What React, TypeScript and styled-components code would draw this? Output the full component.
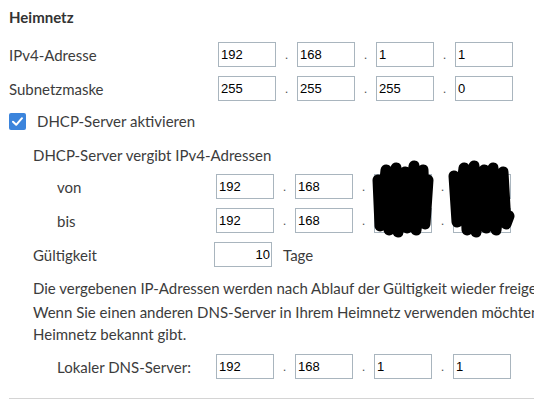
import React from "react";
import styled, { createGlobalStyle } from "styled-components";

const Global = createGlobalStyle`
  html, body { margin: 0; padding: 0; overflow: hidden; background: #ffffff; }
  body { font-family: Lato, "Open Sans", sans-serif; color: #3c3c3c; }
`;

const Page = styled.div`
  width: 900px;
  padding: 7px 0 0 9px;
  display: flex;
  flex-direction: column;
`;

const Heading = styled.h2`
  margin: 0 0 15px 0;
  font-size: 15px;
  line-height: 20px;
  font-weight: 700;
  color: #333;
`;

const Row = styled.div<{ $mt?: number; $indent?: number }>`
  display: flex;
  align-items: center;
  height: 25px;
  margin-top: ${(p) => p.$mt ?? 0}px;
  padding-left: ${(p) => p.$indent ?? 0}px;
`;

const Label = styled.span<{ $w: number }>`
  width: ${(p) => p.$w}px;
  flex: none;
  font-size: 15px;
  line-height: 20px;
  white-space: nowrap;
`;

const Field = styled.input<{ $right?: boolean }>`
  box-sizing: border-box;
  width: 58px;
  height: 25px;
  margin: 0;
  padding: 0 1px 0 2px;
  border: 1px solid #a9b5be;
  border-radius: 0;
  background: #fff;
  color: #000;
  font-family: "Liberation Sans", Arial, sans-serif;
  font-size: 13px;
  text-align: ${(p) => (p.$right ? "right" : "left")};
  outline: none;
`;

const Dot = styled.span`
  width: 21px;
  flex: none;
  text-align: center;
  font-family: "Liberation Sans", Arial, sans-serif;
  font-size: 13px;
  color: #555;
`;

const CheckRow = styled.label`
  display: flex;
  align-items: center;
  height: 22px;
  margin-top: 9px;
  font-size: 15px;
  line-height: 20px;
  gap: 11px;
`;

const CheckBox = styled.span`
  width: 17px;
  height: 17px;
  border-radius: 2px;
  background: #3b84dc;
  display: flex;
  align-items: center;
  justify-content: center;
  flex: none;
`;

const Section = styled.div`
  padding-left: 24px;
  display: flex;
  flex-direction: column;
`;

const TextLine = styled.div<{ $mt?: number }>`
  margin-top: ${(p) => p.$mt ?? 0}px;
  font-size: 15px;
  line-height: 22px;
  white-space: nowrap;
`;

const RangeBlock = styled.div`
  position: relative;
  display: flex;
  flex-direction: column;
`;

const Scribble = styled.svg`
  position: absolute;
  left: 339px;
  top: -6px;
  width: 145px;
  height: 80px;
  pointer-events: none;
`;

const Unit = styled.span`
  margin-left: 11px;
  font-size: 15px;
`;

const Divider = styled.hr`
  margin: 19px 0 0 0;
  border: none;
  border-top: 1px solid #d4d4d4;
  height: 0;
`;

type IpProps = { values: string[] };
const IpInput = ({ values }: IpProps) => (
  <>
    {values.map((v, i) => (
      <React.Fragment key={i}>
        {i > 0 && <Dot>.</Dot>}
        <Field readOnly value={v} />
      </React.Fragment>
    ))}
  </>
);

export default function App() {
  return (
    <>
      <Global />
      <Page>
        <Heading>Heimnetz</Heading>
        <Row>
          <Label $w={209}>IPv4-Adresse</Label>
          <IpInput values={["192", "168", "1", "1"]} />
        </Row>
        <Row $mt={9}>
          <Label $w={209}>Subnetzmaske</Label>
          <IpInput values={["255", "255", "255", "0"]} />
        </Row>
        <CheckRow>
          <CheckBox>
            <svg width="13" height="13" viewBox="0 0 13 13">
              <path d="M2 6.8 L5.2 9.8 L11 3.2" stroke="#fff" strokeWidth="2" fill="none" strokeLinecap="round" strokeLinejoin="round" />
            </svg>
          </CheckBox>
          DHCP-Server aktivieren
        </CheckRow>
        <Section>
          <TextLine $mt={12}>DHCP-Server vergibt IPv4-Adressen</TextLine>
          <RangeBlock>
            <Row $mt={8} $indent={24}>
              <Label $w={159}>von</Label>
              <IpInput values={["192", "168", "", ""]} />
            </Row>
            <Row $mt={9} $indent={24}>
              <Label $w={159}>bis</Label>
              <IpInput values={["192", "168", "", ""]} />
            </Row>
            <Scribble viewBox="0 0 145 80">
              <path
                d="M6,20 L8,66 L14,10 L17,70 L24,8 L26,72 L33,12 L35,68 L42,6 L44,70 L51,10 L53,64 L56,20"
                stroke="#000" strokeWidth="11" fill="none" strokeLinecap="round" strokeLinejoin="round"
              />
              <path
                d="M82,16 L85,62 L92,8 L95,70 L102,6 L104,72 L112,10 L114,68 L121,8 L124,70 L131,12 L134,64 L137,56"
                stroke="#000" strokeWidth="11" fill="none" strokeLinecap="round" strokeLinejoin="round"
              />
            </Scribble>
          </RangeBlock>
          <Row $mt={9}>
            <Label $w={181}>Gültigkeit</Label>
            <Field readOnly value="10" $right />
            <Unit>Tage</Unit>
          </Row>
          <TextLine $mt={10}>
            Die vergebenen IP-Adressen werden nach Ablauf der Gültigkeit wieder freigegeben.
          </TextLine>
          <TextLine $mt={2}>
            Wenn Sie einen anderen DNS-Server in Ihrem Heimnetz verwenden möchten, geben Sie hier dessen IP-Adresse an, die der DHCP-Server im
            <br />
            Heimnetz bekannt gibt.
          </TextLine>
          <Row $mt={9} $indent={24}>
            <Label $w={159}>Lokaler DNS-Server:</Label>
            <IpInput values={["192", "168", "1", "1"]} />
          </Row>
        </Section>
        <Divider />
      </Page>
    </>
  );
}
